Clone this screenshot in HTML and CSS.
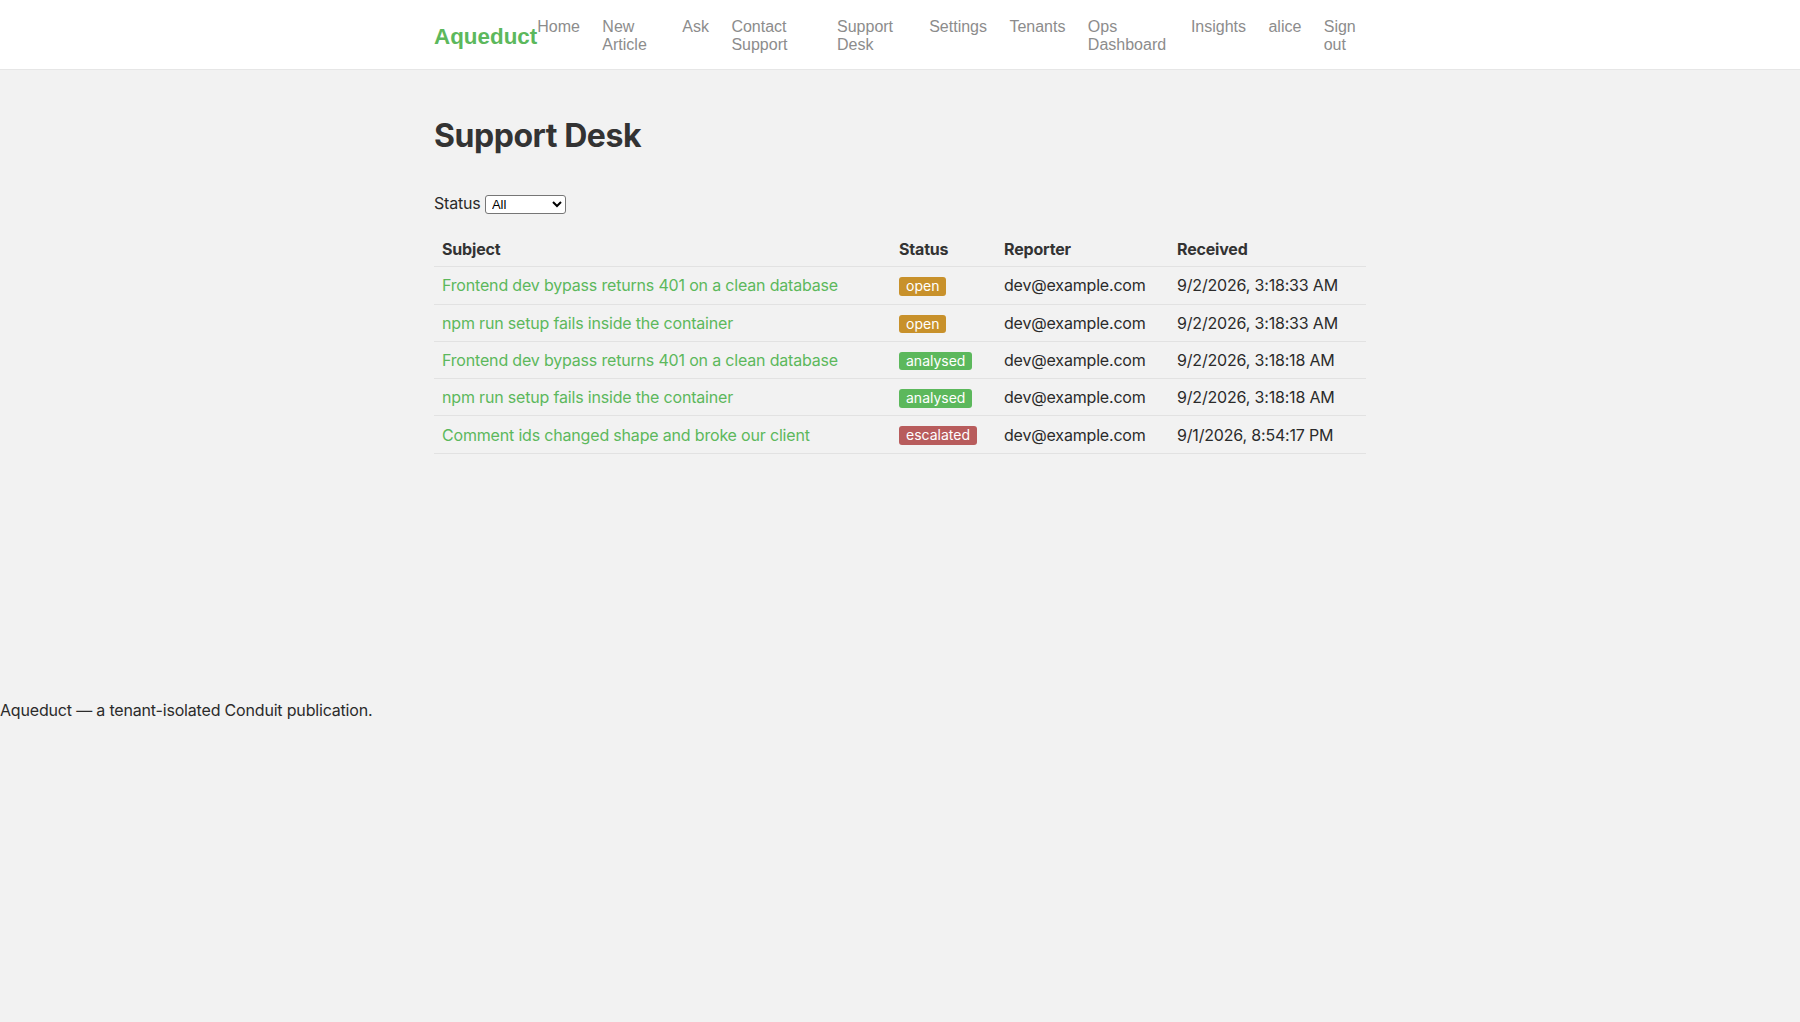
FILE: index.html
```html
<!DOCTYPE html>
<html lang="en">
<head>
<meta charset="utf-8">
<title>Support Desk — Aqueduct</title>
<link rel="stylesheet" href="styles.css">
</head>
<body>
<header class="site-header">
  <div class="container header-inner">
    <a class="logo" href="#">Aqueduct</a>
    <nav class="nav">
      <a class="nav-link" href="#">Home</a>
      <a class="nav-link" href="#">New Article</a>
      <a class="nav-link" href="#">Ask</a>
      <a class="nav-link" href="#">Contact Support</a>
      <a class="nav-link" href="#">Support Desk</a>
      <a class="nav-link" href="#">Settings</a>
      <a class="nav-link" href="#">Tenants</a>
      <a class="nav-link" href="#">Ops Dashboard</a>
      <a class="nav-link" href="#">Insights</a>
      <a class="nav-link" href="#">alice</a>
      <a class="nav-link" href="#">Sign out</a>
    </nav>
  </div>
</header>
<main class="container main">
  <h1 class="page-title">Support Desk</h1>
  <form class="filter">
    <label class="filter-label">Status <select class="filter-select"><option>All</option><option>open</option><option>analysed</option><option>escalated</option></select></label>
  </form>
  <table class="tickets">
    <thead>
      <tr>
        <th class="col-subject">Subject</th>
        <th class="col-status">Status</th>
        <th class="col-reporter">Reporter</th>
        <th class="col-received">Received</th>
      </tr>
    </thead>
    <tbody>
      <tr>
        <td><a class="ticket-link" href="#">Frontend dev bypass returns 401 on a clean database</a></td>
        <td><span class="badge badge-open">open</span></td>
        <td>dev@example.com</td>
        <td>9/2/2026, 3:18:33 AM</td>
      </tr>
      <tr>
        <td><a class="ticket-link" href="#">npm run setup fails inside the container</a></td>
        <td><span class="badge badge-open">open</span></td>
        <td>dev@example.com</td>
        <td>9/2/2026, 3:18:33 AM</td>
      </tr>
      <tr>
        <td><a class="ticket-link" href="#">Frontend dev bypass returns 401 on a clean database</a></td>
        <td><span class="badge badge-analysed">analysed</span></td>
        <td>dev@example.com</td>
        <td>9/2/2026, 3:18:18 AM</td>
      </tr>
      <tr>
        <td><a class="ticket-link" href="#">npm run setup fails inside the container</a></td>
        <td><span class="badge badge-analysed">analysed</span></td>
        <td>dev@example.com</td>
        <td>9/2/2026, 3:18:18 AM</td>
      </tr>
      <tr>
        <td><a class="ticket-link" href="#">Comment ids changed shape and broke our client</a></td>
        <td><span class="badge badge-escalated">escalated</span></td>
        <td>dev@example.com</td>
        <td>9/1/2026, 8:54:17 PM</td>
      </tr>
    </tbody>
  </table>
</main>
<footer class="site-footer">Aqueduct — a tenant-isolated Conduit publication.</footer>
</body>
</html>
```
FILE: styles.css
```css
* { box-sizing: border-box; }

html, body {
  margin: 0;
  padding: 0;
}

body {
  background: #f2f2f2;
  color: #2b2b2b;
  font-family: Inter, "Noto Sans", sans-serif;
  font-size: 16px;
  letter-spacing: -0.18px;
}

.container {
  width: 932px;
  margin: 0 auto;
}

.site-header {
  background: #ffffff;
  border-bottom: 1px solid #e6e6e6;
}

.header-inner {
  display: flex;
  align-items: center;
  height: 69px;
  padding-top: 3px;
}

.logo {
  flex: none;
  font-family: "Liberation Sans", Arial, sans-serif;
  font-weight: bold;
  font-size: 22.4px;
  line-height: 26px;
  letter-spacing: 0;
  color: #5cb85c;
  text-decoration: none;
  margin-top: 2px;
}

.nav {
  display: flex;
  gap: 22.4px;
  flex: 1 1 auto;
  min-width: 0;
}

.nav-link {
  font-family: "Liberation Sans", Arial, sans-serif;
  font-size: 16px;
  line-height: 18.4px;
  letter-spacing: 0;
  color: #8c8c8c;
  text-decoration: none;
}

.main {
  padding-top: 47px;
}

.page-title {
  margin: 0 0 38px;
  font-size: 32px;
  line-height: 38.4px;
  font-weight: 700;
  color: #333333;
  letter-spacing: -0.45px;
}

.filter {
  margin: 0 0 15px;
  line-height: 21px;
}

.filter-label {
  color: #2b2b2b;
}

.filter-select {
  width: 81px;
  height: 19px;
  font-family: "Liberation Sans", Arial, sans-serif;
  font-size: 13px;
  letter-spacing: 0;
  border: 1px solid #767676;
  border-radius: 3px;
  background: #ffffff;
  color: #000;
  padding: 0 0 0 2px;
}

.tickets {
  width: 932px;
  border-collapse: collapse;
  table-layout: fixed;
}

.tickets th,
.tickets td {
  text-align: left;
  padding: 0 8px;
  height: 37.3px;
  line-height: 20px;
  border-bottom: 1px solid #e2e2e2;
  vertical-align: middle;
  white-space: nowrap;
}

.tickets th {
  font-weight: 700;
  color: #333333;
  padding-top: 2px;
}

.col-subject { width: 457px; }
.col-status { width: 105px; }
.col-reporter { width: 173px; }
.col-received { width: 197px; }

.ticket-link {
  color: #5cb85c;
  text-decoration: none;
}

.badge {
  display: inline-block;
  font-size: 14px;
  line-height: 16.5px;
  padding: 1px 7px;
  border-radius: 3px;
  color: #ffffff;
  letter-spacing: 0;
  vertical-align: middle;
}

.badge-open { background: #c8912b; }
.badge-analysed { background: #5cb85c; }
.badge-escalated { background: #b85c5c; }

.site-footer {
  margin-top: 246px;
  line-height: 20px;
  color: #2b2b2b;
}
```
